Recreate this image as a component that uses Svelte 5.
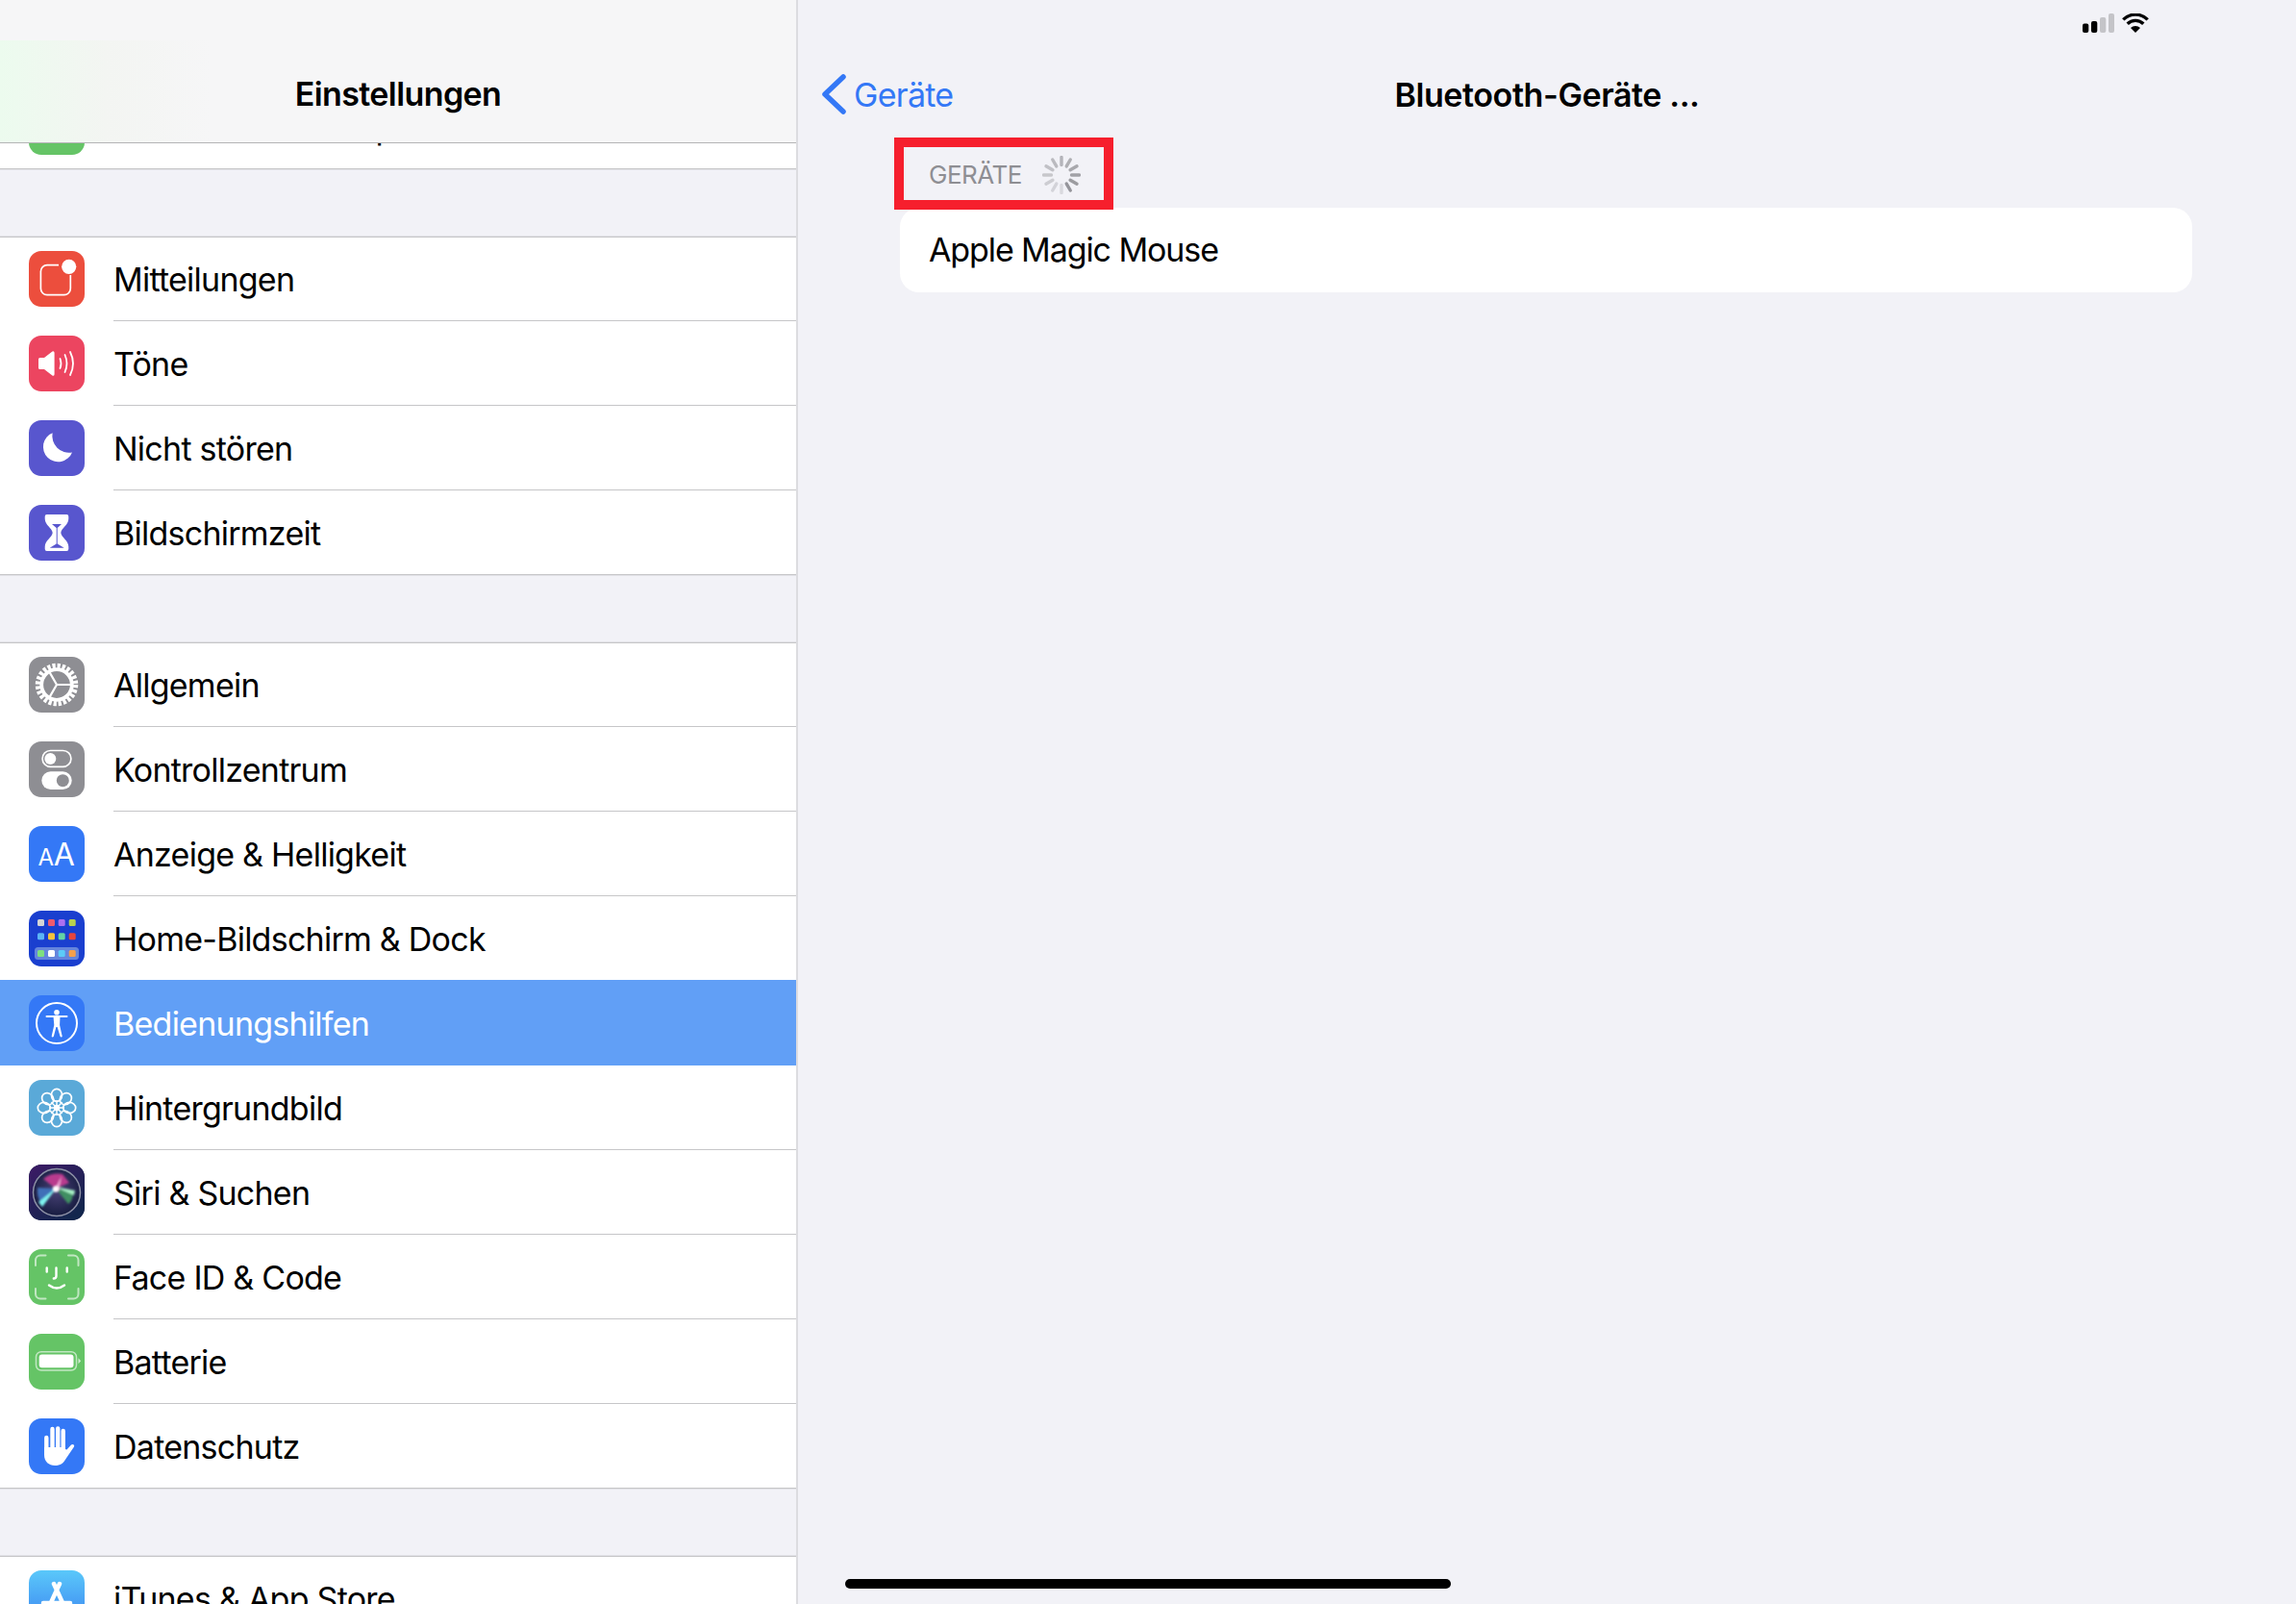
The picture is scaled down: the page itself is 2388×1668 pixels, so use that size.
<script>
  const groups = [
    { rows: [{ name: "Persönlicher Hotspot", icon: "hotspot", color: "#65c466" }], clipped: true },
    {
      rows: [
        { name: "Mitteilungen", icon: "notify", color: "#ec4e3d" },
        { name: "Töne", icon: "sound", color: "#ec4560" },
        { name: "Nicht stören", icon: "moon", color: "#5856ce" },
        { name: "Bildschirmzeit", icon: "hourglass", color: "#5856ce" },
      ],
    },
    {
      rows: [
        { name: "Allgemein", icon: "gear", color: "#8e8e93" },
        { name: "Kontrollzentrum", icon: "toggles", color: "#8e8e93" },
        { name: "Anzeige & Helligkeit", icon: "text", color: "#3478f6" },
        { name: "Home-Bildschirm & Dock", icon: "home", color: "#1a3fcf" },
        { name: "Bedienungshilfen", icon: "access", color: "#3478f6", selected: true },
        { name: "Hintergrundbild", icon: "flower", color: "#5aa9d8" },
        { name: "Siri & Suchen", icon: "siri", color: "#1b1f4a" },
        { name: "Face ID & Code", icon: "face", color: "#65c466" },
        { name: "Batterie", icon: "battery", color: "#65c466" },
        { name: "Datenschutz", icon: "hand", color: "#3478f6" },
      ],
    },
    { rows: [{ name: "iTunes & App Store", icon: "store", color: "#4a9cf5" }] },
  ];

  const homeApps = [
    [9, 9, "#d5d5d5"], [20, 9, "#ee5a6e"], [30.7, 9, "#ac70f0"], [41.7, 9, "#b8d24e"],
    [9, 23.3, "#5bb5f5"], [20, 23.3, "#f5c33c"], [30.7, 23.3, "#64d3a4"], [41.7, 23.3, "#e8453c"],
    [9, 41, "#7fe07f"], [20, 41, "#ffffff"], [30.7, 41, "#5ccbf8"], [41.7, 41, "#f5a04c"],
  ];

  const petals = [0, 45, 90, 135, 180, 225, 270, 315];
  const spokes = [0, 30, 60, 90, 120, 150, 180, 210, 240, 270, 300, 330];
  // 150deg is the darkest spoke, the others fade going anticlockwise
  const spinnerOpacity = (deg) => 0.7 - (((150 - deg + 360) % 360) / 30) * 0.047;
</script>

<div class="page">
  <aside class="sidebar">
    <header class="sidebar-head">Einstellungen</header>
    <div class="list">
      {#each groups as group}
        <section class="group" class:clipped={group.clipped}>
          {#each group.rows as row}
            <div class="row" class:selected={row.selected}>
              <span class="icon" class:store={row.icon === "store"} style="background-color: {row.color}">
                <svg viewBox="0 0 58 58" width="58" height="58">
                  {#if row.icon === "notify"}
                    <path d="M31 14.6H19a6.6 6.6 0 0 0-6.6 6.6v17.9a6.6 6.6 0 0 0 6.6 6.6h17.7a6.6 6.6 0 0 0 6.6-6.6V25" fill="none" stroke="#fff" stroke-width="1.7" />
                    <circle cx="41.7" cy="16.3" r="7.6" fill="#fff" />
                  {:else if row.icon === "sound"}
                    <path d="M10 24.5q0-1.6 1.6-1.6h4.4l8.4-6.3q1.9-1 2.2 1.2v22.4q-.3 2.2-2.2 1.2L16 35.1h-4.4q-1.6 0-1.6-1.6z" fill="#fff" />
                    <g fill="none" stroke="#fff" stroke-width="1.8" stroke-linecap="round">
                      <path d="M32.5 24q2 5 0 10" />
                      <path d="M37.5 20q4 9 0 18" />
                      <path d="M43 17q6 12 0 24" />
                    </g>
                  {:else if row.icon === "moon"}
                    <path d="M24.6 13.2A15.6 15.6 0 1 0 45 33.4 17.4 17.4 0 0 1 24.6 13.2z" fill="#fff" />
                  {:else if row.icon === "hourglass"}
                    <path d="M18.7 10h20.6q2 0 2 2v2.500c0 6.500-7.500 9.500-8 14.500.5 5 8 8 8 14.500V46q0 2-2 2H18.700q-2 0-2-2v-2.500c0-6.500 7.500-9.500 8-14.500-.5-5-8-8-8-14.500V12q0-2 2-2z" fill="#fff" />
                    <path d="M24 20h10l-4.300 4v16.500l7 4.200H21.700l7-4.200V24z" fill="#5856ce" />
                  {:else if row.icon === "gear"}
                    <circle cx="29" cy="29" r="19.500" fill="none" stroke="#fff" stroke-width="5.500" stroke-dasharray="3.200 1.905" />
                    <circle cx="29" cy="29" r="15.800" fill="none" stroke="#fff" stroke-width="3.800" />
                    <path d="M29 29H45M29 29L21 15.100M29 29L21 42.900" fill="none" stroke="#fff" stroke-width="2.200" />
                  {:else if row.icon === "toggles"}
                    <rect x="14.100" y="9.500" width="29.800" height="16.800" rx="8.400" fill="none" stroke="#fff" stroke-width="1.700" />
                    <circle cx="22.300" cy="18" r="6" fill="#fff" />
                    <rect x="13.300" y="31.300" width="31.400" height="18.700" rx="9.350" fill="#fff" />
                    <circle cx="35.300" cy="40.700" r="6.500" fill="#8e8e93" />
                  {:else if row.icon === "text"}
                    <text x="17.700" y="40.700" class="aa small">A</text>
                    <text x="36.700" y="40.700" class="aa big">A</text>
                  {:else if row.icon === "home"}
                    <rect x="6" y="38" width="46" height="13" rx="3.500" fill="#6585dc" />
                    {#each homeApps as app}
                      <rect x={app[0]} y={app[1]} width="7" height="7" rx="1.500" fill={app[2]} />
                    {/each}
                  {:else if row.icon === "access"}
                    <circle cx="29" cy="29" r="21" fill="none" stroke="#fff" stroke-width="2" />
                    <circle cx="29" cy="17.700" r="2.800" fill="#fff" />
                    <path d="M18.500 22h21" fill="none" stroke="#fff" stroke-width="2" stroke-linecap="round" />
                    <path d="M25.500 22h7l-.4 9 2.600 11.500q.1 1-.9 1t-1.300-1L29.600 33h-1.200L25.900 42.500q-.3 1-1.300 1t-.9-1L26.300 31z" fill="#fff" />
                  {:else if row.icon === "flower"}
                    <g fill="none" stroke="#fff" stroke-width="1.700">
                      {#each petals as deg}
                        <ellipse cx="29" cy="15.800" rx="5.600" ry="6.500" transform="rotate({deg} 29 29)" />
                      {/each}
                    </g>
                    <path d="M29 21V37M21 29H37M23.300 23.300L34.700 34.700M34.700 23.300L23.300 34.700" fill="none" stroke="#fff" stroke-width="1.400" />
                    <circle cx="29" cy="29" r="3.200" fill="#fff" />
                  {:else if row.icon === "siri"}
                    <defs>
                      <linearGradient id="siriBg" x1="0" y1="0" x2="0.7" y2="1">
                        <stop offset="0" stop-color="#3d1a66" />
                        <stop offset="1" stop-color="#12264d" />
                      </linearGradient>
                      <radialGradient id="siriDisc" cx="0.5" cy="0.45" r="0.55">
                        <stop offset="0" stop-color="#4a4378" />
                        <stop offset="1" stop-color="#171c40" />
                      </radialGradient>
                      <filter id="siriSoft" x="-30%" y="-30%" width="160%" height="160%">
                        <feGaussianBlur stdDeviation="1.200" />
                      </filter>
                    </defs>
                    <rect width="58" height="58" rx="13" fill="url(#siriBg)" />
                    <circle cx="29" cy="29" r="24.500" fill="url(#siriDisc)" stroke="#8d91a6" stroke-width="1.500" />
                    <g filter="url(#siriSoft)">
                      <path d="M28 25L15 15Q24 8 35 10L42 19z" fill="#b93a8e" />
                      <path d="M28 25L9 24Q8 34 13 40z" fill="#3f70b8" />
                      <path d="M28 25L46 29Q46 37 41 41z" fill="#3f8f62" />
                      <path d="M29 24L10 39L14 44z" fill="#7ff4f0" />
                      <path d="M27 23L47 32L48 27z" fill="#a8f2c6" />
                      <path d="M27 26L34 12L31 27z" fill="#f0a8d8" />
                    </g>
                    <circle cx="28" cy="25.500" r="3.200" fill="#fff" filter="url(#siriSoft)" />
                  {:else if row.icon === "face"}
                    <g fill="none" stroke="#fff" stroke-opacity=".6" stroke-width="2" stroke-linecap="round">
                      <path d="M7 17v-5.500a5 5 0 0 1 5-5h5.500" />
                      <path d="M41 6.500h5.500a5 5 0 0 1 5 5V17" />
                      <path d="M7 41v5.500a5 5 0 0 0 5 5h5.500" />
                      <path d="M41 51.500h5.500a5 5 0 0 0 5-5V41" />
                    </g>
                    <g fill="none" stroke="#fff" stroke-width="2.400" stroke-linecap="round">
                      <path d="M18.700 19.500v4M39.700 19.500v4" />
                      <path d="M28.500 19.500V28q0 2.500-2.700 2.500" />
                      <path d="M21 37.500q8 6 16 0" />
                    </g>
                  {:else if row.icon === "battery"}
                    <rect x="7.500" y="18.700" width="42" height="19.400" rx="5.500" fill="none" stroke="#fff" stroke-opacity=".6" stroke-width="1.500" />
                    <rect x="10.700" y="21.500" width="35.800" height="13.800" rx="3" fill="#fff" />
                    <path d="M51.500 25.300l2.600 3-2.600 3z" fill="#fff" fill-opacity=".7" />
                  {:else if row.icon === "hand"}
                    <path d="M16 30V38C16 45 21 49 27 49 33 49 36 46.500 38.500 42L47 29.500C48 27.500 45.500 26 44 27.500L39.500 32.500 37.800 32V30z" fill="#fff" />
                    <path d="M18.300 20V33M24.500 11V33M30.200 10.500V33M35.700 13V33" fill="none" stroke="#fff" stroke-width="4.400" stroke-linecap="round" />
                  {:else if row.icon === "store"}
                    <path d="M20 40L32 14M38 40L26 14M15 34H43" fill="none" stroke="#fff" stroke-width="4.500" stroke-linecap="round" />
                  {:else}
                    <path d="M29 12v34" fill="none" stroke="#fff" stroke-width="3" />
                  {/if}
                </svg>
              </span>
              <span class="label">{row.name}</span>
            </div>
          {/each}
        </section>
      {/each}
    </div>
  </aside>

  <main class="detail">
    <div class="status">
      <svg viewBox="0 0 33 20" width="33" height="20">
        <rect x="0" y="10.500" width="6.300" height="9.500" rx="2" fill="#000" />
        <rect x="9" y="8" width="6.300" height="12" rx="2" fill="#000" />
        <rect x="18" y="4" width="6.300" height="16" rx="2" fill="#c4c4c8" />
        <rect x="27" y="0" width="6" height="20" rx="2" fill="#c4c4c8" />
      </svg>
      <svg viewBox="0 0 28 20" width="28" height="20">
        <g fill="none" stroke="#000" stroke-width="3.400">
          <path d="M1.300 6.400a18 18 0 0 1 25.400 0" />
          <path d="M5.700 10.800a11.800 11.800 0 0 1 16.600 0" />
        </g>
        <path d="M9 15a7 7 0 0 1 10 0l-5 5z" fill="#000" />
      </svg>
    </div>
    <nav class="nav">
      <a class="back" href="#devices">
        <svg viewBox="0 0 26 42" width="26" height="42">
          <path d="M23 3L4 21l19 18" fill="none" stroke="#3478f6" stroke-width="5.500" stroke-linecap="round" stroke-linejoin="round" />
        </svg>
        Geräte
      </a>
      <h1>Bluetooth-Geräte ...</h1>
    </nav>
    <div class="content">
      <div class="section-head">
        GERÄTE
        <svg viewBox="0 0 40 40" width="40" height="40" class="spinner">
          {#each spokes as deg}
            <line x1="20" y1="1.500" x2="20" y2="9.500" stroke="#6e6e73" stroke-width="3.400" stroke-linecap="round" stroke-opacity={spinnerOpacity(deg)} transform="rotate({deg} 20 20)" />
          {/each}
        </svg>
        <span class="mark"></span>
      </div>
      <div class="card">Apple Magic Mouse</div>
    </div>
    <div class="home-bar"></div>
  </main>
</div>

<style>
  :global(body) {
    margin: 0;
    background: #f2f2f7;
  }
  .page {
    display: flex;
    width: 2388px;
    height: 1668px;
    overflow: hidden;
    font-family: Inter, "Liberation Sans", sans-serif;
    font-size: 34px;
    color: #000;
    background: #f2f2f7;
  }
  .sidebar {
    width: 828px;
    flex: none;
    display: flex;
    flex-direction: column;
    border-right: 2px solid #dcdce0;
  }
  .sidebar-head {
    height: 148px;
    flex: none;
    display: flex;
    align-items: flex-end;
    justify-content: center;
    line-height: 100px;
    font-weight: 600;
    letter-spacing: -0.6px;
    border-bottom: 1px solid #b4b4b6;
    position: relative;
    z-index: 1;
    background: linear-gradient(to right, #ecfbee, #f3f5f2 110px, transparent 220px) 0 42px / 100% 106px no-repeat, #f6f6f7;
  }
  .list {
    flex: 1;
    min-height: 0;
  }
  .group {
    margin-top: 70px;
    background: #fff;
    border-top: 1px solid #c6c6c8;
    border-bottom: 1px solid #c6c6c8;
    box-shadow: 0 -1px 0 rgba(198, 198, 200, 0.35), 0 1px 0 rgba(198, 198, 200, 0.35);
  }
  .group.clipped {
    margin-top: -61px;
  }
  .row {
    display: flex;
    align-items: center;
    height: 88px;
    padding-left: 30px;
  }
  .row:first-child {
    margin-top: -1px;
  }
  .row:last-child {
    margin-bottom: -1px;
  }
  .row.selected {
    background: #619ff6;
    box-shadow: 0 -1px 0 #619ff6;
    color: #fff;
    position: relative;
  }
  .icon {
    width: 58px;
    height: 58px;
    flex: none;
    border-radius: 13px;
    overflow: hidden;
    display: block;
  }
  .icon svg {
    display: block;
  }
  .icon.store {
    background-image: linear-gradient(#5ac8fa, #3b82f0);
  }
  .aa {
    fill: #fff;
    text-anchor: middle;
    font-family: Inter, sans-serif;
  }
  .aa.small {
    font-size: 24px;
  }
  .aa.big {
    font-size: 32px;
  }
  .label {
    flex: 1;
    align-self: stretch;
    margin-left: 30px;
    padding-top: 1px;
    display: flex;
    align-items: center;
    box-sizing: border-box;
    border-bottom: 1px solid #c6c6c8;
    letter-spacing: -0.75px;
  }
  .row:last-child .label,
  .row.selected .label {
    border-bottom: none;
  }
  .detail {
    flex: 1;
    display: flex;
    flex-direction: column;
    position: relative;
  }
  .status {
    display: flex;
    justify-content: flex-end;
    align-items: flex-end;
    gap: 8px;
    padding-right: 153px;
    box-sizing: border-box;
    height: 34px;
  }
  .nav {
    height: 109px;
    display: grid;
    grid-template-columns: 1fr auto 1fr;
    align-items: center;
    padding-top: 19px;
    box-sizing: border-box;
  }
  .back {
    display: flex;
    align-items: center;
    gap: 8px;
    margin-left: 24px;
    color: #3478f6;
    text-decoration: none;
    letter-spacing: -0.7px;
  }
  .nav h1 {
    margin: 0;
    font-size: 34px;
    font-weight: 600;
    letter-spacing: -0.4px;
  }
  .content {
    margin: 0 108px 0 106px;
  }
  .section-head {
    position: relative;
    height: 73px;
    display: flex;
    align-items: center;
    gap: 21px;
    padding: 4px 0 0 30px;
    box-sizing: border-box;
    font-size: 26px;
    letter-spacing: -0.5px;
    color: #8e8e93;
  }
  .mark {
    position: absolute;
    left: -6px;
    top: 0;
    width: 228px;
    height: 75px;
    box-sizing: border-box;
    border: 10px solid #f61f2d;
    z-index: 1;
  }
  .card {
    height: 88px;
    border-radius: 20px;
    background: #fff;
    display: flex;
    align-items: center;
    padding: 0 0 2px 30px;
    box-sizing: border-box;
    letter-spacing: -1.1px;
  }
  .home-bar {
    position: absolute;
    left: 49px;
    bottom: 16px;
    width: 630px;
    height: 10px;
    border-radius: 5px;
    background: #000;
  }
</style>
